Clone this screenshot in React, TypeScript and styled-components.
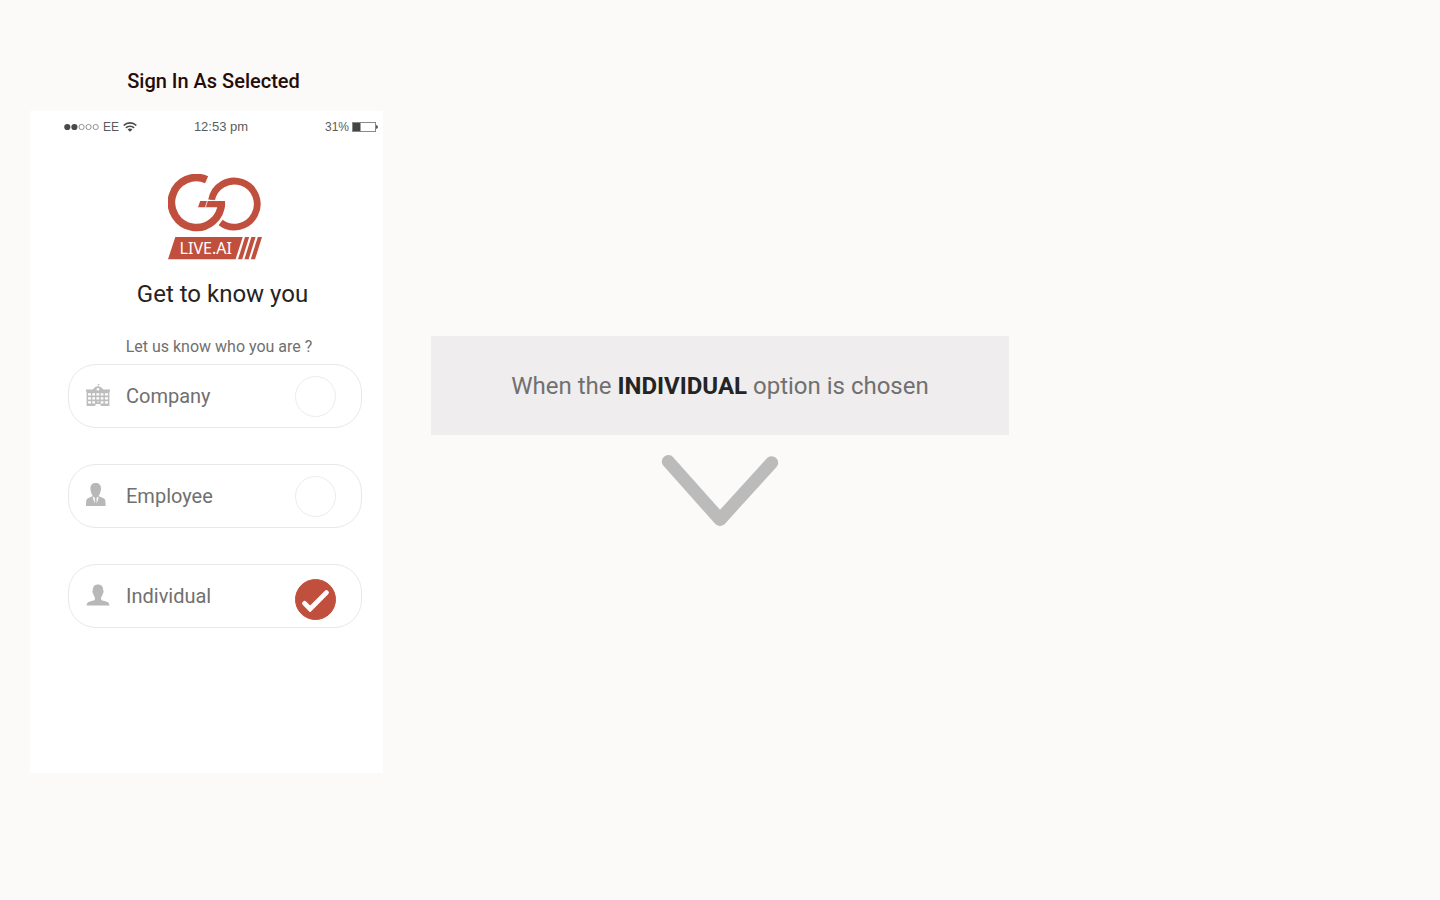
import React, { useState } from "react";
import styled, { createGlobalStyle } from "styled-components";

const GlobalStyle = createGlobalStyle`
  * { box-sizing: border-box; }
  body {
    margin: 0;
    background: #fbfaf8;
    font-family: Roboto, "Liberation Sans", sans-serif;
    color: #707070;
  }
`;

const Page = styled.main`
  display: grid;
  grid-template-columns: minmax(300px, 353fr) minmax(0, 578fr) minmax(0, 353fr);
  column-gap: 48px;
  min-height: 100vh;
  padding: 0 30px;
`;

const Screen = styled.section`
  padding: 69px 0 32px;
`;

const ScreenName = styled.h1`
  margin: 0 0 18px;
  padding-left: 14px;
  text-align: center;
  font-size: 20px;
  line-height: 24px;
  font-weight: 500;
  color: #250c0a;
`;

const Phone = styled.div`
  min-height: 662px;
  background: #ffffff;
`;

const StatusBar = styled.div`
  display: grid;
  grid-template-columns: 1fr auto 1fr;
  align-items: center;
  height: 32px;
  padding: 0 5px 0 34px;
  font-family: "Liberation Sans", sans-serif;
  font-size: 12px;
  line-height: 16px;
  color: #5c5c5c;
`;

const StatusGroup = styled.div<{ $end?: boolean }>`
  display: flex;
  align-items: center;
  justify-content: ${(p) => (p.$end ? "flex-end" : "flex-start")};
  gap: ${(p) => (p.$end ? 3 : 4)}px;
`;

const Clock = styled.time`
  font-size: 13px;
`;

const Form = styled.form`
  display: flex;
  flex-direction: column;
  align-items: center;
  padding: 31px 21px 32px 38px;
`;

const Title = styled.h2`
  margin: 20px 0 29px;
  padding-left: 15px;
  font-size: 24px;
  line-height: 28px;
  font-weight: 400;
  color: #242424;
`;

const Options = styled.fieldset`
  display: flex;
  flex-direction: column;
  gap: 36px;
  width: 100%;
  min-width: 0;
  margin: 0;
  padding: 0;
  border: 0;
`;

const Question = styled.p`
  margin: 0 0 7px;
  padding-left: 8px;
  font-size: 16px;
  line-height: 20px;
`;

const Option = styled.label`
  display: flex;
  align-items: center;
  gap: 16px;
  height: 64px;
  padding: 0 25px 0 17px;
  border: 1px solid #e8e8e8;
  border-radius: 28px;
  font-size: 20px;
  line-height: 24px;
  cursor: pointer;
`;

const OptionIcon = styled.span`
  display: flex;
  width: 24px;
  padding-bottom: 3px;
`;

const OptionName = styled.span`
  flex: 1;
`;

const Mark = styled.span<{ $on: boolean }>`
  display: grid;
  place-items: center;
  padding-top: ${(p) => (p.$on ? 7 : 0)}px;

  > * {
    grid-area: 1 / 1;
  }
  svg {
    pointer-events: none;
  }
`;

const Radio = styled.input`
  appearance: none;
  width: 41px;
  height: 41px;
  margin: 0;
  border: 1px solid #ececec;
  border-radius: 50%;
  cursor: pointer;

  &:checked {
    border-color: #c0503d;
    background: #c0503d;
  }
`;

const Notes = styled.section`
  display: flex;
  flex-direction: column;
  align-items: center;
  padding-top: 336px;
`;

const Banner = styled.p`
  width: 100%;
  margin: 0 0 19px;
  padding: 36px 24px 35px;
  background: #efeded;
  text-align: center;
  font-size: 24px;
  line-height: 28px;

  strong {
    font-weight: 700;
    color: #242424;
  }
`;

const Signal = () => (
  <svg width="35" height="8" viewBox="0 0 35 8" aria-hidden="true">
    <g fill="#4a4a4a">
      <circle cx="3.3" cy="4" r="3.1" />
      <circle cx="10.4" cy="4" r="3.1" />
    </g>
    <g fill="none" stroke="#777" strokeWidth="0.8">
      <circle cx="17.6" cy="4" r="2.6" />
      <circle cx="24.6" cy="4" r="2.6" />
      <circle cx="31.7" cy="4" r="2.6" />
    </g>
  </svg>
);

const Wifi = () => (
  <svg width="14" height="10" viewBox="0 0 14 10" aria-hidden="true">
    <g fill="none" stroke="#4a4a4a" strokeWidth="1.7">
      <path d="M0.7 3.5C4.2 0 9.8 0 13.3 3.5" />
      <path d="M2.9 5.9C5.2 3.7 8.8 3.7 11.1 5.9" />
    </g>
    <path d="M7 9.8L4.6 7.5C5.9 6.3 8.1 6.3 9.4 7.5Z" fill="#4a4a4a" />
  </svg>
);

const Battery = () => (
  <svg width="26" height="10" viewBox="0 0 26 10" aria-hidden="true">
    <rect x="0.5" y="0.5" width="23" height="9" fill="#fff" stroke="#888" />
    <rect x="1" y="1" width="7.5" height="8" fill="#444" />
    <path d="M24 3Q26 3.3 26 5Q26 6.7 24 7Z" fill="#555" />
  </svg>
);

const Logo = () => (
  <svg width="94" height="86" viewBox="0 0 94 86" role="img" aria-label="GO LIVE.AI">
    <g fill="none">
      <path d="M43.6 26A23 23 0 1 1 52.6 48.6" stroke="#c0503d" strokeWidth="6.8" />
      <path d="M53.4 29A25 25 0 0 1 45 48" stroke="#fff" strokeWidth="9.4" />
      <path d="M38.6 5.7A25 25 0 1 0 53.4 29" stroke="#c0503d" strokeWidth="7.6" />
    </g>
    <path d="M32.2 27H57V33.2H30Z" fill="#c0503d" />
    <path d="M39.4 26.8L37.4 33.4M39 26.4H58" stroke="#fff" strokeWidth="0.8" fill="none" />
    <g fill="#c0503d">
      <path d="M7.3 63H74.7L67.6 85.3H0Z" />
      <path d="M77 63H81.2L74.2 85.3H70Z" />
      <path d="M83.4 63H87.6L80.6 85.3H76.4Z" />
      <path d="M89.8 63H94L87 85.3H82.8Z" />
    </g>
    <text x="11.6" y="79.6" fill="#fff" fontFamily="Noto Sans, Open Sans, sans-serif" fontSize="16">
      LIVE.AI
    </text>
  </svg>
);

const CompanyIcon = () => (
  <svg width="24" height="24" viewBox="0 0 24 24" aria-hidden="true">
    <path d="M11.8 4V1.2L13.4 0.8V1.8L12.3 2.2V4Z" fill="#bdbdbd" />
    <path d="M0 6.4H6.5L9 4.2Q12 2.4 15 4.2L17.5 6.4H24V8.4H23.4V23H15.2L14 21H10L8.8 23H0.6V8.4H0Z" fill="#bdbdbd" />
    <path
      d="M2 10.2H5V12.6H2ZM6.3 10.2H9V12.6H6.3ZM10.4 10.2H13.2V12.6H10.4ZM14.7 10.2H17.4V12.6H14.7ZM18.9 10.2H22V12.6H18.9ZM2 14.2H5V16.4H2ZM6.3 14.2H9V16.4H6.3ZM10.4 14.2H13.2V16.4H10.4ZM14.7 14.2H17.4V16.4H14.7ZM18.9 14.2H22V16.4H18.9ZM2 18.2H5V20.4H2ZM6.3 18.2H9V20.4H6.3ZM14.7 18.2H17.4V20.4H14.7ZM18.9 18.2H22V20.4H18.9Z"
      fill="#fff"
    />
    <circle cx="12" cy="6.2" r="1.3" fill="#fff" />
    <circle cx="12" cy="18.8" r="0.7" fill="#fff" />
  </svg>
);

const EmployeeIcon = () => (
  <svg width="20" height="24" viewBox="0 0 20 24" aria-hidden="true">
    <path
      d="M9.7 0C13 0 15 2 15 5.4C15 8.8 13.4 11.8 12.5 13L18.2 15.4C19.4 16 19.6 19 19.6 23H0C0 19 0.2 16 1.4 15.4L6.9 13C6 11.8 4.4 8.8 4.4 5.4C4.4 2 6.4 0 9.7 0Z"
      fill="#b8b8b8"
    />
    <path d="M7.4 13.4L8.9 15.2L8.7 20.5L6.8 14.4ZM12 13.4L10.5 15.2L10.7 20.5L12.6 14.4Z" fill="#fff" />
  </svg>
);

const IndividualIcon = () => (
  <svg width="24" height="22" viewBox="0 0 24 22" aria-hidden="true">
    <path
      d="M12 0.4C15.4 0.4 17.4 2.4 17.2 6.6C17.9 7 17.7 9.2 16.7 9.8C16.4 11.6 15.8 12.6 15.1 13.2V15.4C15.8 17 20.6 17 22.2 18.4C23 19.1 23.3 20.2 23.6 21.6H0.4C0.7 20.2 1 19.1 1.8 18.4C3.4 17 8.2 17 8.9 15.4V13.2C8.2 12.6 7.6 11.6 7.3 9.8C6.3 9.2 6.1 7 6.8 6.6C6.6 2.4 8.6 0.4 12 0.4Z"
      fill="#b8b8b8"
    />
  </svg>
);

const Check = () => (
  <svg width="28" height="24" viewBox="0 0 28 24" aria-hidden="true">
    <path d="M2.6 15.4L8.1 21L24.4 4.6" fill="none" stroke="#fff" strokeWidth="4.8" strokeLinecap="round" />
  </svg>
);

const Chevron = () => (
  <svg width="118" height="72" viewBox="0 0 118 72" aria-hidden="true">
    <path d="M7.3 7.5L59 65.5L110.7 8.7" fill="none" stroke="#bbbbbb" strokeWidth="13" strokeLinecap="round" strokeLinejoin="round" />
  </svg>
);

const roles = [
  { name: "Company", Icon: CompanyIcon },
  { name: "Employee", Icon: EmployeeIcon },
  { name: "Individual", Icon: IndividualIcon },
];

export default function App() {
  const [role, setRole] = useState("Individual");

  return (
    <>
      <GlobalStyle />
      <Page>
        <Screen>
          <ScreenName>Sign In As Selected</ScreenName>
          <Phone>
            <StatusBar>
              <StatusGroup>
                <Signal />
                <span>EE</span>
                <Wifi />
              </StatusGroup>
              <Clock>12:53 pm</Clock>
              <StatusGroup $end>
                <span>31%</span>
                <Battery />
              </StatusGroup>
            </StatusBar>
            <Form>
              <Logo />
              <Title>Get to know you</Title>
              <Question id="question">Let us know who you are ?</Question>
              <Options aria-labelledby="question">
                {roles.map(({ name, Icon }) => (
                  <Option key={name}>
                    <OptionIcon>
                      <Icon />
                    </OptionIcon>
                    <OptionName>{name}</OptionName>
                    <Mark $on={role === name}>
                      <Radio
                        type="radio"
                        name="role"
                        value={name}
                        checked={role === name}
                        onChange={() => setRole(name)}
                      />
                      {role === name && <Check />}
                    </Mark>
                  </Option>
                ))}
              </Options>
            </Form>
          </Phone>
        </Screen>
        <Notes>
          <Banner>
            When the <strong>INDIVIDUAL</strong> option is chosen
          </Banner>
          <Chevron />
        </Notes>
      </Page>
    </>
  );
}
